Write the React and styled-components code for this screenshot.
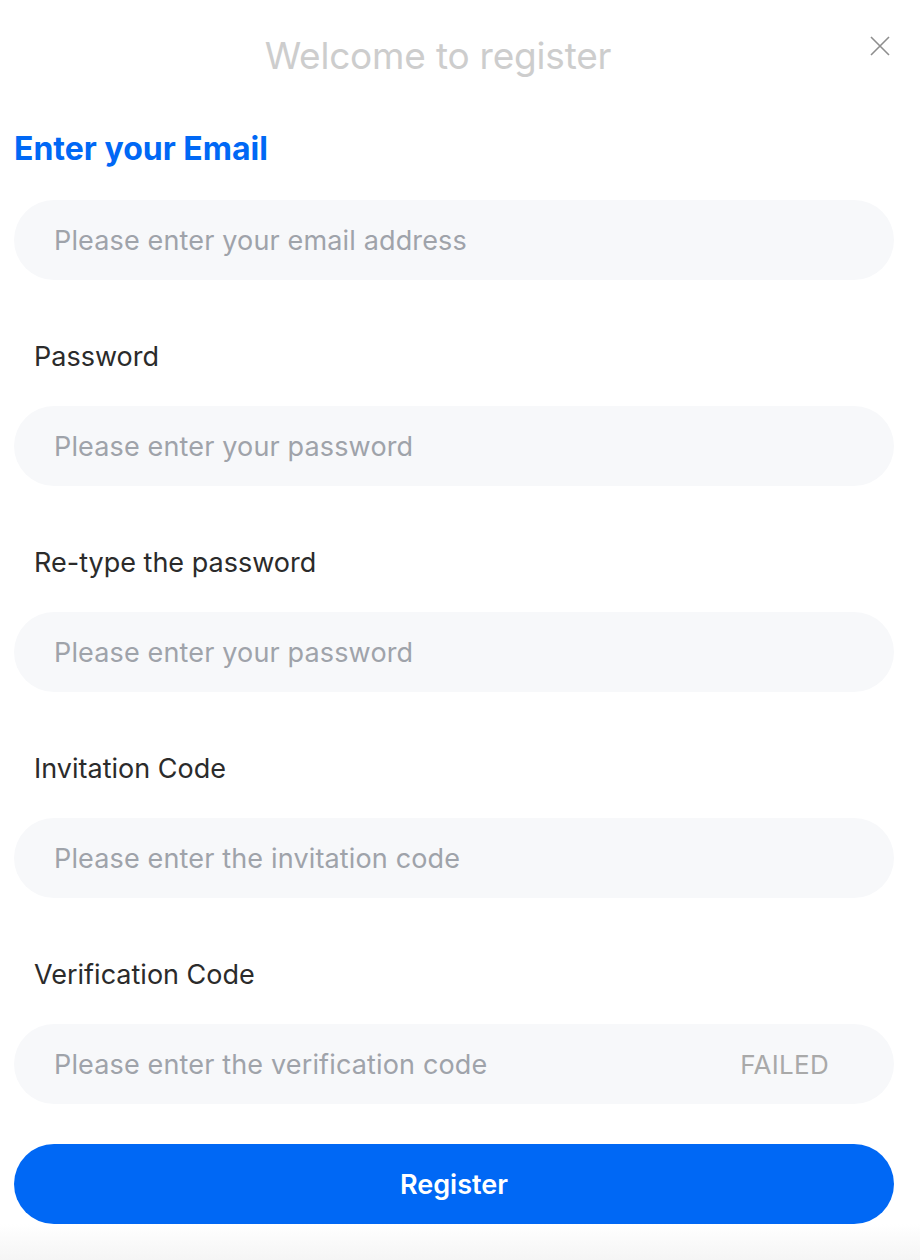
import React from "react";
import styled, { createGlobalStyle } from "styled-components";

const Global = createGlobalStyle`
  html, body { margin: 0; padding: 0; background: #fff; }
  body { font-family: Inter, "Noto Sans", sans-serif; }
  * { box-sizing: border-box; }
`;

const Page = styled.div`
  width: 920px;
  min-height: 1260px;
  display: flex;
  flex-direction: column;
  background: #fff;
`;

const Form = styled.div`
  display: flex;
  flex-direction: column;
  padding: 0 26px 0 14px;
`;

const Header = styled.div`
  height: 110px;
  display: grid;
  grid-template-columns: 1fr auto 1fr;
  align-items: center;
`;

const Title = styled.h1`
  grid-column: 2;
  margin: 0;
  padding-right: 32px;
  font-size: 37px;
  font-weight: 400;
  color: #cdcdcd;
  letter-spacing: -0.2px;
`;

const Close = styled.button`
  grid-column: 3;
  justify-self: end;
  align-self: start;
  margin-top: 34px;
  margin-right: 2px;
  width: 24px;
  height: 24px;
  padding: 0;
  border: none;
  background: none;
  display: flex;
  align-items: center;
  justify-content: center;
`;

const Heading = styled.h2`
  margin: 19px 0 31px;
  font-size: 32px;
  line-height: 40px;
  font-weight: 700;
  color: #0068f5;
`;

const Label = styled.label`
  display: block;
  margin: 59px 0 31px 20px;
  font-size: 27px;
  line-height: 36px;
  color: #2b2b2b;
`;

const Field = styled.div`
  height: 80px;
  border-radius: 40px;
  background: #f7f8fa;
  display: flex;
  align-items: center;
  padding: 0 65px 0 38px;
`;

const Input = styled.input`
  flex: 1;
  min-width: 0;
  border: none;
  outline: none;
  background: transparent;
  font-family: inherit;
  font-size: 27px;
  letter-spacing: 0.15px;
  color: #333;
  &::placeholder { color: #9fa3aa; }
`;

const CodeButton = styled.span`
  font-size: 26px;
  letter-spacing: 0.3px;
  color: #a9a9a9;
`;

const Submit = styled.button`
  margin-top: 40px;
  height: 80px;
  border: none;
  border-radius: 40px;
  background: #0068f5;
  color: #fff;
  font-family: inherit;
  font-size: 27px;
  font-weight: 600;
`;

const Footer = styled.div`
  flex: 1;
  background: linear-gradient(#ffffff, #f5f5f5);
`;

const fields = [
  { label: "Password", ph: "Please enter your password", type: "password" },
  { label: "Re-type the password", ph: "Please enter your password", type: "password" },
  { label: "Invitation Code", ph: "Please enter the invitation code" },
  { label: "Verification Code", ph: "Please enter the verification code", code: true },
];

export default function App() {
  return (
    <Page>
      <Global />
      <Form>
        <Header>
          <Title>Welcome to register</Title>
          <Close aria-label="close">
            <svg width="22" height="22" viewBox="0 0 22 22">
              <path d="M2 2L20 20M20 2L2 20" stroke="#8e8e8e" strokeWidth="1.6" fill="none" />
            </svg>
          </Close>
        </Header>
        <Heading>Enter your Email</Heading>
        <Field>
          <Input placeholder="Please enter your email address" />
        </Field>
        {fields.map((f) => (
          <React.Fragment key={f.label}>
            <Label>{f.label}</Label>
            <Field>
              <Input type={f.type || "text"} placeholder={f.ph} />
              {f.code && <CodeButton>FAILED</CodeButton>}
            </Field>
          </React.Fragment>
        ))}
        <Submit>Register</Submit>
      </Form>
      <Footer />
    </Page>
  );
}
